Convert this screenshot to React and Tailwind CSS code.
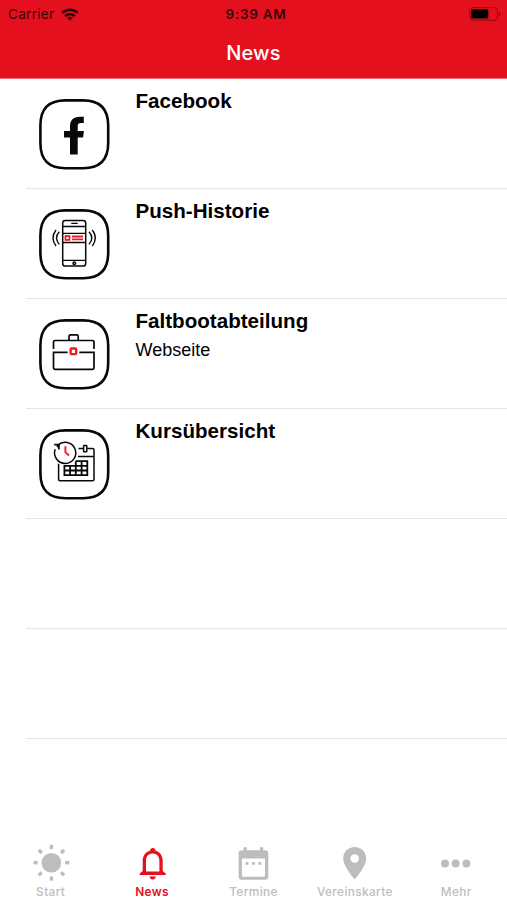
import clsx from 'clsx'

function IconFrame({ children }) {
  return (
    <svg viewBox="0 0 71 71" className="w-[71px] h-[71px] shrink-0" fill="none" stroke="#080808" strokeWidth="1.5">
      <path
        strokeWidth="2.6"
        d="M26.6 1.4H44C61 1.4 69.2 9.600 69.2 26.600V44C69.2 61 61 69.200 44 69.200H26.600C9.600 69.200 1.400 61 1.400 44V26.600C1.400 9.600 9.600 1.400 26.600 1.400z"
      />
      {children}
    </svg>
  )
}

function FacebookIcon() {
  return (
    <IconFrame>
      <path
        fill="#080808"
        stroke="none"
        d="M31 55.600V38.500h-6V32h6v-4.400C31 21.200 34.400 17.800 40.600 17.800h4.200v6.300h-2.600c-2.800 0-3.500 1-3.500 3.400V32h6.200l-.8 6.500h-5.400v17.100z"
      />
    </IconFrame>
  )
}

function PushIcon() {
  return (
    <IconFrame>
      <rect x="23.700" y="11.500" width="23" height="45.600" rx="2.600" />
      <path d="M32.300 14.300h6.400M23.700 17.500h23M23.700 24.300h23M23.700 33.500h23M23.700 51.300h23" strokeWidth="1.300" />
      <circle cx="35.300" cy="54.200" r="1.300" />
      <path d="M20.300 22.800q-5.600 6.300 0 12.600M17 21q-6 8 0 16M50 22.800q5.600 6.300 0 12.600M53.300 21q6 8 0 16" strokeWidth="1.400" />
      <rect x="26.500" y="27" width="3.900" height="3.900" stroke="#ee1c25" strokeWidth="1.800" />
      <path d="M33 27.500h11M33 30.300h11" stroke="#ee1c25" strokeWidth="1.800" />
    </IconFrame>
  )
}

function BriefcaseIcon() {
  return (
    <IconFrame>
      <path d="M30 21.500v-4.200q0-1.500 1.500-1.500h6.200q1.500 0 1.500 1.500v4.200" strokeWidth="1.700" />
      <path d="M14.500 30v-7q0-1.500 1.500-1.500h37.500q1.500 0 1.500 1.500v7" strokeWidth="1.700" />
      <path d="M28.700 33.400H14.500v15.400q0 1.500 1.500 1.500h37.500q1.500 0 1.500-1.500V33.400H40.300" strokeWidth="1.700" />
      <rect x="31.600" y="29.500" width="5.600" height="5.600" rx="1" stroke="#ee1c25" strokeWidth="2.400" />
    </IconFrame>
  )
}

function CourseIcon() {
  return (
    <IconFrame>
      <path d="M18.800 16.200A10.600 10.600 0 1 1 16.200 20.200" />
      <path d="M15.200 15.600h4.700v4.800M19.700 15.800l-1.700 2" strokeWidth="1.800" />
      <path d="M26.400 17.300v5.900l3.600 3.300" stroke="#ee1c25" strokeWidth="1.900" />
      <path d="M19.600 34.800v15.400q0 1.500 1.500 1.500h32.400q1.500 0 1.500-1.500V21q0-1.500-1.500-1.500h-5.200M44.400 19.500h-4.900M39 27.600h16" />
      <rect x="44.600" y="16.400" width="3.200" height="6.400" rx="0.500" />
      <path d="M36.700 32.200h11.600v14H25.400v-9.400h22.900M25.400 41.500h22.900M31.100 36.800v9.400M36.800 32.200v14M42.600 32.200v14" strokeWidth="1.800" />
    </IconFrame>
  )
}

function SunIcon() {
  return (
    <svg viewBox="0 0 40 40" className="w-10 h-10">
      <circle cx="20.400" cy="19.700" r="9.800" fill="currentColor" />
      <g stroke="currentColor" strokeWidth="3.400">
        {[0, 45, 90, 135, 180, 225, 270, 315].map((a) => (
          <path key={a} d="M20.400 1.800v4.200" transform={`rotate(${a} 20.400 19.700)`} />
        ))}
      </g>
    </svg>
  )
}

function BellIcon() {
  return (
    <svg viewBox="0 0 40 40" className="w-10 h-10" fill="currentColor">
      <path
        fillRule="evenodd"
        d="M20.800 5c1.600 0 2.600 1 2.600 2.600 4.600 1.400 7.300 5.200 7.300 10.200v10.200l3 2.500v1.500H7.700v-1.500l3-2.500V17.800c0-5 2.900-8.800 7.500-10.200 0-1.600 1-2.600 2.600-2.600zM14 28.600h13.400V18c0-4.600-2.400-7.400-6.700-7.400S14 13.400 14 18z"
      />
      <path d="M17.500 33.600h6.400c-.3 1.800-1.500 2.900-3.200 2.900s-2.900-1.100-3.200-2.900z" />
    </svg>
  )
}

function CalendarIcon() {
  return (
    <svg viewBox="0 0 40 40" className="w-10 h-10" fill="currentColor">
      <path
        fillRule="evenodd"
        d="M10.600 4.300h3.200v3h13.200v-3h3.200v3h1.900q3.200 0 3.200 3.200v23q0 3.200-3.200 3.200H8.800q-3.200 0-3.200-3.200v-23q0-3.200 3.200-3.200h1.800zM8.900 15.400v16.800q0 1.500 1.500 1.500h20.100q1.500 0 1.500-1.500V15.400z"
      />
      <path d="M12.600 18.900h2.800v2.800h-2.800zM19 18.900h2.800v2.800H19zM25.400 18.900h2.800v2.800h-2.800z" />
    </svg>
  )
}

function PinIcon() {
  return (
    <svg viewBox="0 0 40 40" className="w-10 h-10" fill="currentColor">
      <path
        fillRule="evenodd"
        d="M19.700 4c6.500 0 11.500 5 11.500 11.400 0 8-11.500 20.900-11.500 20.900S8.200 23.400 8.200 15.400C8.200 9 13.200 4 19.700 4zm0 7.200a4.300 4.300 0 1 0 0 8.600 4.300 4.300 0 0 0 0-8.600z"
      />
    </svg>
  )
}

function MoreIcon() {
  return (
    <svg viewBox="0 0 40 40" className="w-10 h-10" fill="currentColor">
      <circle cx="9" cy="20.400" r="4" />
      <circle cx="19.700" cy="20.400" r="4" />
      <circle cx="30.400" cy="20.400" r="4" />
    </svg>
  )
}

const rows = [
  { title: 'Facebook', Icon: FacebookIcon },
  { title: 'Push-Historie', Icon: PushIcon },
  { title: 'Faltbootabteilung', subtitle: 'Webseite', Icon: BriefcaseIcon },
  { title: 'Kursübersicht', Icon: CourseIcon },
  {},
  {},
]

const tabs = [
  { label: 'Start', Icon: SunIcon },
  { label: 'News', Icon: BellIcon, active: true },
  { label: 'Termine', Icon: CalendarIcon },
  { label: 'Vereinskarte', Icon: PinIcon },
  { label: 'Mehr', Icon: MoreIcon },
]

function StatusBar() {
  return (
    <div className="grid grid-cols-3 items-center h-7 pl-2 pr-1.5 text-[#3b0508]">
      <div className="flex items-center gap-[7px]">
        <span className="text-[13.5px] tracking-[0.3px]">Carrier</span>
        <svg viewBox="0 0 18 13" className="w-[18px] h-[13px]" fill="none" stroke="#240204" strokeWidth="2.400">
          <path d="M1.200 4.900c4.500-4.300 11.100-4.300 15.600 0M4.200 8.100c2.800-2.600 6.800-2.600 9.600 0" />
          <path d="M9 12.600L6.200 9.900q2.800-2.100 5.600 0z" fill="#240204" stroke="none" />
        </svg>
      </div>
      <span className="pl-[3px] text-center text-[13.5px] font-semibold tracking-[0.700px] whitespace-nowrap">9:39 AM</span>
      <svg viewBox="0 0 32 14" className="w-8 h-3.5 -mt-px justify-self-end">
        <rect x="0.800" y="0.600" width="27.600" height="12.600" rx="3" fill="none" stroke="#8c0a12" />
        <rect x="2.300" y="2.300" width="17" height="9.300" rx="1.300" fill="#000" />
        <path d="M29.800 4.800c2 .6 2 3.800 0 4.400z" fill="#8c0a12" />
      </svg>
    </div>
  )
}

export default function App() {
  return (
    <div className="flex flex-col w-full h-[900px] bg-white overflow-hidden font-['Inter',sans-serif]">
      {/* Header */}
      <header className="h-[79px] shrink-0 bg-[#e4101e] border-b border-[#f0707a]">
        <StatusBar />
        <h1 className="h-12 pt-px leading-[48px] text-center text-white text-[20px] font-medium tracking-[0.1px]">News</h1>
      </header>

      {/* List */}
      <ul className="flex-1 pl-[26px] font-['Liberation_Sans',sans-serif] text-black">
        {rows.map(({ title, subtitle, Icon }, i) => (
          <li key={i} className="flex h-[110px] pl-[13px] pt-5 border-b border-[#e6e6e6]">
            {Icon && <Icon />}
            {title && (
              <div className="-mt-2.5 ml-[25.500px]">
                <div className="text-[20.6px] leading-6 font-bold">{title}</div>
                {subtitle && <div className="mt-[5px] text-[18px] leading-6">{subtitle}</div>}
              </div>
            )}
          </li>
        ))}
      </ul>

      {/* Tab bar */}
      <nav className="grid grid-cols-5 h-[57px] shrink-0">
        {tabs.map(({ label, Icon, active }) => (
          <div
            key={label}
            className={clsx('flex flex-col items-center', active ? 'text-[#e4101e]' : 'text-[#bdbdbd]')}
          >
            <Icon />
            <span
              className={clsx(
                'mt-px text-[11.800px] leading-4 tracking-[0.4px] whitespace-nowrap',
                active ? 'font-semibold' : 'font-medium'
              )}
            >
              {label}
            </span>
          </div>
        ))}
      </nav>
    </div>
  )
}
